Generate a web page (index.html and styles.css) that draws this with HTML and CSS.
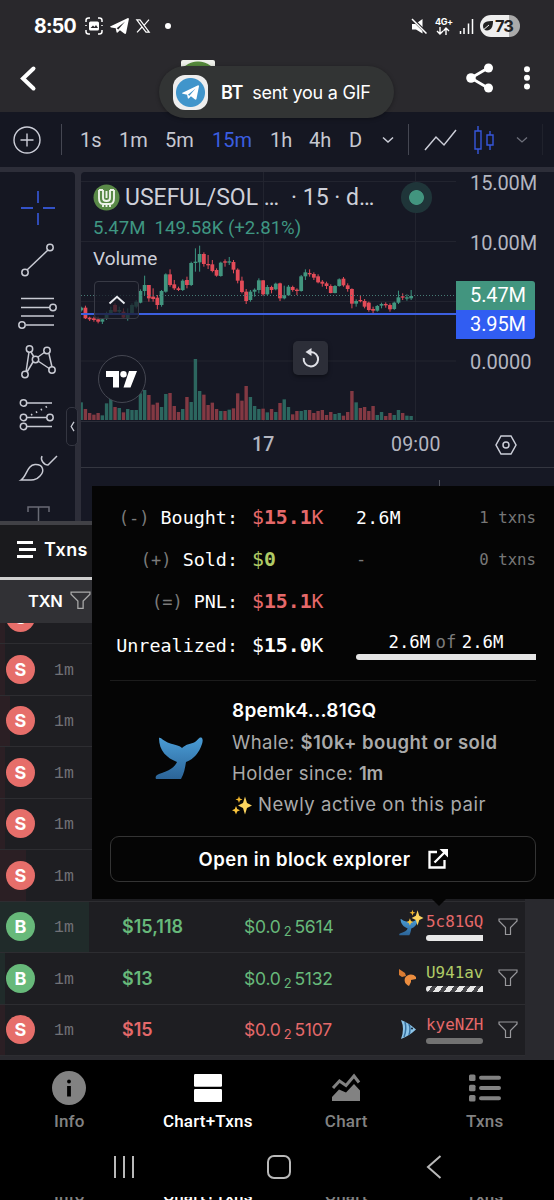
FILE: index.html
```html
<!DOCTYPE html>
<html lang="en">
<head>
<meta charset="utf-8">
<title>USEFUL/SOL</title>
<link rel="stylesheet" href="styles.css">
</head>
<body>
<svg width="0" height="0" class="defs">
  <defs>
    <linearGradient id="blue" x1="0" y1="0" x2="0" y2="1"><stop offset="0" stop-color="#4a9dd6"/><stop offset="1" stop-color="#2c6498"/></linearGradient>
    <symbol id="funnel" viewBox="0 0 20 20"><path d="M1 2H19V4L12.500 10.500V17.500H7.500V10.500L1 4Z" fill="none" stroke="currentColor" stroke-width="1.200"/></symbol>
    <symbol id="tail" viewBox="0 0 48 42"><path d="M4 1C6 0 8 4 14 6C20 8 24 8 27 11C31 7 36 7 40 5C43 3 44 0 46 .5C48 1 48 4 47 7C44 16 39 22 31 25C30 31 29 37 26 42H1C0 40 1 38 4 37C14 34 20 30 22 25C12 21 4 14 4 1Z" fill="url(#blue)"/></symbol>
    <symbol id="sparkles" viewBox="0 0 20 20"><path d="M13 1.500L15 8L20 10.500L15 13L13 19.500L11 13L6 10.500L11 8Z" fill="#fbd45f"/><path d="M7 1L7.900 3.600L10.500 4.500L7.900 5.400L7 8L6.100 5.400L3.500 4.500L6.100 3.600Z" fill="#f4b92e"/><path d="M4 11L5.200 14L8 15.200L5.200 16.400L4 19.500L2.800 16.400L0 15.200L2.800 14Z" fill="#fbc63c"/></symbol>
    <symbol id="plane" viewBox="0 0 20 17"><path d="M0 9L19 0Q20 0 20 1L17 16Q16.500 17.500 15 16.500L10.500 13L8 15.500Q7 16 6.800 15L6 11L1 10Q0 9.700 0 9ZM7 11L16 3.800L8.700 12.200Z" fill="currentColor" fill-rule="evenodd"/></symbol>
  </defs>
</svg>

<div class="status">
  <span class="time">8:50</span>
  <svg class="shot" viewBox="0 0 18 18"><g fill="none" stroke="#fff" stroke-width="1.500"><path d="M1 5V3.500Q1 1 3.500 1H5M13 1H14.500Q17 1 17 3.500V5M17 13V14.500Q17 17 14.500 17H13M5 17H3.500Q1 17 1 14.500V13M1 8V9M17 8V9"/></g><rect x="4" y="4.500" width="10" height="9" rx="1.500" fill="#fff"/><path d="M5.500 11L8 8.500L9.500 10L11 8L13 11Z" fill="#29282c"/></svg>
  <svg class="tg"><use href="#plane"/></svg>
  <svg class="xlogo" viewBox="0 0 14 14"><path d="M.8.800H4L13.200 13.200H10ZM13 .6L8 6.300M6 8L1 13.400" fill="none" stroke="#fff" stroke-width="1.200"/></svg>
  <i class="dot"></i>
  <svg class="mute" viewBox="0 0 17 17"><path d="M1 6H4.500L11.500 1V15.500L5 11.500H1Z" fill="#fff"/><path d="M1.500 1L16 15.500" stroke="#29282c" stroke-width="3"/><path d="M1 1L15.500 15.500" stroke="#fff" stroke-width="1.500"/></svg>
  <span class="net"><b>4G+</b><svg viewBox="0 0 14 8"><path d="M4 0V7M1 4L4 7L7 4M10 8V1M7.500 4L10 1L13 4" fill="none" stroke="#fff" stroke-width="1.400"/></svg></span>
  <svg class="signal" viewBox="0 0 15 16"><path d="M1.500 16V13M5 16V10M9.500 16V5.500M13.500 16V1" stroke="#fff" stroke-width="1.500"/></svg>
  <span class="battery"><svg viewBox="0 0 12 12"><path d="M1 6C1 2 5 1 11 1C11 7 9 10.500 5 10.500C2.500 10.500 1 8.500 1 6Z" fill="#222"/><path d="M0 11L7 5" stroke="#eee" stroke-width="1"/></svg>73</span>
</div>

<div class="header">
  <svg class="back" viewBox="0 0 16 25"><path d="M13.500 2.500L3 12.500L13.500 22.500" fill="none" stroke="#fff" stroke-width="4" stroke-linecap="round"/></svg>
  <i class="peek"></i>
  <svg class="share" viewBox="0 0 28 30"><path d="M22 5L5 15L22 25" fill="none" stroke="#fff" stroke-width="2.800"/><g fill="#fff"><circle cx="22.500" cy="5" r="4.500"/><circle cx="5" cy="15" r="4.800"/><circle cx="22.500" cy="25" r="4.500"/></g></svg>
  <svg class="more" viewBox="0 0 6 24"><g fill="#fff"><circle cx="3" cy="3.200" r="3"/><circle cx="3" cy="11.800" r="3"/><circle cx="3" cy="20.400" r="3"/></g></svg>
</div>
<div class="toast"><span class="appicon"><svg><use href="#plane"/></svg></span><b>BT</b><span>sent you a GIF</span></div>

<div class="intervals">
  <svg width="28" height="28" viewBox="0 0 28 28"><g fill="none" stroke="#ccced8" stroke-width="1.400"><circle cx="14" cy="14" r="13"/><path d="M7.500 14H20.500M14 7.500V20.500"/></g></svg>
  <i class="sep"></i><span>1s</span><span>1m</span><span>5m</span><span class="on">15m</span><span>1h</span><span>4h</span><span>D</span>
  <svg width="12" height="8" viewBox="0 0 12 8"><path d="M1 1.500L6 6L11 1.500" fill="none" stroke="#ccced8" stroke-width="1.500"/></svg>
  <i class="sep"></i>
  <svg width="33" height="22" viewBox="0 0 33 22"><path d="M1 21L12 8L20 16L32 1" fill="none" stroke="#ccced8" stroke-width="1.500"/></svg>
  <svg width="20" height="30" viewBox="0 0 20 30"><path d="M1 6H7V24H1ZM4 1V6M4 24V29M13 10H19V20H13ZM16 6V10M16 20V25" fill="none" stroke="#3657dc" stroke-width="1.400"/></svg>
  <svg width="12" height="8" viewBox="0 0 12 8"><path d="M1 1.500L6 6L11 1.500" fill="none" stroke="#6e707b" stroke-width="1.300"/></svg>
  <i class="sep faint"></i>
</div>

<div class="workspace">
  <div class="tools">
    <svg viewBox="0 0 36 36"><path d="M18 1V13M18 23V35M1 18H13M23 18H35" stroke="#3352c8" stroke-width="1.800"/></svg>
    <svg viewBox="0 0 36 36"><g fill="none" stroke="#c8cad3" stroke-width="1.500"><path d="M7 28L28 8"/><circle cx="5" cy="30.500" r="3.200"/><circle cx="30" cy="5.500" r="3.200"/></g></svg>
    <svg viewBox="0 0 36 36"><g fill="none" stroke="#c8cad3" stroke-width="1.500"><path d="M1 4.500H34M1 13.500H30M1 22H34M6 31H34"/><circle cx="33" cy="13.500" r="3.200"/><circle cx="2" cy="31" r="3.200"/></g></svg>
    <svg viewBox="0 0 36 36"><g fill="none" stroke="#c8cad3" stroke-width="1.500"><path d="M6 27L9 7M11 7L14 12M18 12L25 7M29 9L32 22M18 16L30 24M13 17L7 27"/><circle cx="9.500" cy="4" r="3.200"/><circle cx="27" cy="5.500" r="3.200"/><circle cx="15.500" cy="14.500" r="3.200"/><circle cx="32" cy="25" r="3.200"/><circle cx="5" cy="29.500" r="3.200"/></g></svg>
    <svg viewBox="0 0 36 36"><g fill="none" stroke="#c8cad3" stroke-width="1.500"><circle cx="3.500" cy="6" r="3.200"/><circle cx="3.500" cy="20.500" r="3.200"/><circle cx="30" cy="20.500" r="3.200"/><circle cx="3.500" cy="29.500" r="3.200"/><path d="M7 6H32M7 20.500H27M7 29.500H32"/><path d="M11 18L30 8" stroke-dasharray="1.500 4" stroke-width="1.800"/></g></svg>
    <svg viewBox="0 0 36 36"><path d="M1 31C7 27 7 16 15 15.500C23 15 25 22 20 27C16 32 10 31 1 31ZM22 7C20 11 24 16 28 16L37 7" fill="none" stroke="#c8cad3" stroke-width="1.500"/></svg>
    <svg viewBox="0 0 36 36"><path d="M8 11V6H29V11M18.500 6V28M14 28H23" fill="none" stroke="#696b75" stroke-width="1.500"/></svg>
  </div>
  <div class="chart">
    <svg id="plot" width="375" height="249" viewBox="81 172 375 249"></svg>
    <div class="legend">
      <div class="pair"><svg width="27" height="27" viewBox="0 0 27 27"><circle cx="13.500" cy="13.500" r="13" fill="#5a8a48"/><path d="M6 6V14Q6 20 10 20M10 20V23M21 6V14Q21 20 17 20M17 20V23M10 6V14Q10 17 13.500 17Q17 17 17 14V6M6 6H10M17 6H21M13.500 7V14M10 20H17M13.500 20V23" fill="none" stroke="#eef3ea" stroke-width="1.900"/></svg><span class="sym">USEFUL/SOL …</span><span class="res">· 15 · d…</span><i class="live"></i></div>
      <div class="quote"><span>5.47M</span><span>149.58K (+2.81%)</span></div>
      <div class="vol">Volume</div>
      <div class="fold"><svg width="18" height="10" viewBox="0 0 18 10"><path d="M1.500 8.500L9 1.800L16.500 8.500" fill="none" stroke="#e8e9ee" stroke-width="2"/></svg></div>
    </div>
    <div class="tv"><svg width="32" height="17" viewBox="0 0 32 17"><path d="M0 0H13V16.500H7V6H0ZM23 0H31L24.500 16.500H17.500Z" fill="#fff"/><circle cx="17.500" cy="3.300" r="3.200" fill="#fff"/></svg></div>
    <div class="reset"><svg width="18" height="20" viewBox="0 0 18 20"><path d="M1.800 10A7.200 7.200 0 1 0 9 4H6" fill="none" stroke="#dfe0e6" stroke-width="2"/><path d="M3.500 4L9.500 0V8Z" fill="#dfe0e6"/></svg></div>
    <div class="scale"><span>15.00M</span><span>10.00M</span><b class="up">5.47M</b><b class="line">3.95M</b><span class="zero">0.0000</span></div>
    <div class="times"><b>17</b><span>09:00</span><svg width="22" height="20" viewBox="0 0 22 20"><g fill="none" stroke="#ccced8" stroke-width="1.500"><path d="M6 1H16L21 10L16 19H6L1 10Z"/><circle cx="11" cy="10" r="3"/></g></svg></div>
    <i class="tick"></i>
  </div>
  <div class="handle"><svg width="5" height="11" viewBox="0 0 5 11"><path d="M4 .8L1.200 5.500L4 10.200" fill="none" stroke="#c8cad3" stroke-width="1.300"/></svg></div>
</div>

<div class="tabs"><svg width="19" height="17" viewBox="0 0 19 17"><path d="M0 1.500H16M2 8.500H19M0 15.500H16" stroke="#fff" stroke-width="3"/></svg>Txns</div>
<div class="thead">TXN<svg><use href="#funnel"/></svg></div>

<div class="list">
  <div class="row sell"><i class="bar" style="width:5px"></i><b class="badge">S</b><span class="age">1m</span></div>
  <div class="row sell"><i class="bar" style="width:5px"></i><b class="badge">S</b><span class="age">1m</span></div>
  <div class="row sell"><i class="bar" style="width:10px"></i><b class="badge">S</b><span class="age">1m</span></div>
  <div class="row sell"><i class="bar" style="width:5px"></i><b class="badge">S</b><span class="age">1m</span></div>
  <div class="row sell"><i class="bar" style="width:5px"></i><b class="badge">S</b><span class="age">1m</span></div>
  <div class="row sell"><i class="bar" style="width:26px"></i><b class="badge">S</b><span class="age">1m</span></div>
  <div class="row buy"><i class="bar" style="width:89px"></i><b class="badge">B</b><span class="age">1m</span><b class="usd">$15,118</b><span class="price">$0.0<sub>2</sub>5614</span><span class="kind"><svg class="wtail"><use href="#tail"/></svg><svg class="wspark"><use href="#sparkles"/></svg></span><span class="wallet red">5c81GQ<i class="full"></i></span><svg class="filter"><use href="#funnel"/></svg></div>
  <div class="row buy"><i class="bar" style="width:5px"></i><b class="badge">B</b><span class="age">1m</span><b class="usd">$13</b><span class="price">$0.0<sub>2</sub>5132</span><span class="kind"><svg width="18" height="18" viewBox="0 0 18 18"><path d="M0 0L6 4L7 7L3 8L0 6Z" fill="#d97b32"/><path d="M6 9C8 5 14 4 17 8L17 10L12 11L12 13L10 17C6 15 5 12 6 9Z" fill="#ec8d3f"/></svg></span><span class="wallet lime">U941av<i class="striped"></i></span><svg class="filter"><use href="#funnel"/></svg></div>
  <div class="row sell"><i class="bar" style="width:5px"></i><b class="badge">S</b><span class="age">1m</span><b class="usd">$15</b><span class="price">$0.0<sub>2</sub>5107</span><span class="kind"><svg width="18" height="19" viewBox="0 0 18 19"><path d="M2 0Q10 3 17 9.500Q10 16 2 19Q6 9 2 0Z" fill="#8cc4e8"/><path d="M6 2Q8 9 5 17M10 4Q12 9 10 15" fill="none" stroke="#356f9f" stroke-width="1.500"/><circle cx="13" cy="8.500" r="1" fill="#123"/></svg></span><span class="wallet red">kyeNZH<i class="empty"></i></span><svg class="filter"><use href="#funnel"/></svg></div>
</div>

<div class="popover">
  <div class="stats">
    <span class="label"><em>(-)</em> Bought:</span><span class="val red">$<b>15.1</b>K</span><span>2.6M</span><span class="count">1 txns</span>
    <span class="label"><em>(+)</em> Sold:</span><span class="val lime">$<b>0</b></span><em>-</em><span class="count">0 txns</span>
    <span class="label"><em>(=)</em> PNL:</span><span class="val red">$<b>15.1</b>K</span><span></span><span></span>
    <span class="label">Unrealized:</span><span class="val">$<b>15.0</b>K</span><div class="holding"><span>2.6M <em>of</em> 2.6M</span><i></i></div>
  </div>
  <div class="maker">
    <svg class="whale"><use href="#tail"/></svg>
    <div class="lines"><b class="addr">8pemk4...81GQ</b><p>Whale: <b>$10k+ bought or sold</b></p><p>Holder since: <b class="since">1m</b></p><p class="fresh"><svg><use href="#sparkles"/></svg>Newly active on this pair</p></div>
  </div>
  <div class="explore">Open in block explorer<svg width="20" height="20" viewBox="0 0 20 20"><path d="M9 3H1.500V18.500H16.500V11M6.500 13.500L17.500 2.500" fill="none" stroke="#fff" stroke-width="2.300"/><path d="M11.500 0H20V8.500Z" fill="#fff"/></svg></div>
  <i class="caret"></i>
</div>

<div class="nav">
  <div><svg width="34" height="34" viewBox="0 0 34 34"><circle cx="17" cy="17" r="17" fill="#828282"/><circle cx="17" cy="10.500" r="1.900"/><path d="M17 15V25.500" stroke="#000" stroke-width="3.800"/></svg><span>Info</span></div>
  <div class="sel"><svg width="28" height="34" viewBox="0 0 28 34"><rect y="3" width="28" height="12.700" rx="1.200" fill="#fff"/><rect y="18" width="28" height="13" rx="1.200" fill="#fff"/></svg><span>Chart+Txns</span></div>
  <div><svg width="28" height="34" viewBox="0 0 28 34"><path d="M0 30V26L7 18.500L14 21.500L22 13L28 19.500V30Z" fill="#828282"/><path d="M1 17L7.500 10L14 14.500L22 5L27 11.500" fill="none" stroke="#828282" stroke-width="3"/></svg><span>Chart</span></div>
  <div><svg width="32" height="34" viewBox="0 0 32 34"><g fill="#828282"><rect y="3.500" width="6.500" height="6.500" rx="1.500"/><rect y="13.700" width="6.500" height="6.500" rx="1.500"/><rect y="24" width="6.500" height="6.500" rx="1.500"/></g><path d="M12 6.700H30M12 17H30M12 27.300H30" stroke="#828282" stroke-width="4" stroke-linecap="round"/></svg><span>Txns</span></div>
</div>
<div class="sysnav">
  <svg width="22" height="24" viewBox="0 0 22 24"><path d="M2 1V23M11 1V23M20 1V23" stroke="#b9b9b9" stroke-width="2"/></svg>
  <svg width="24" height="24" viewBox="0 0 24 24"><rect x="1" y="1" width="22" height="22" rx="6" fill="none" stroke="#b9b9b9" stroke-width="2"/></svg>
  <svg width="16" height="24" viewBox="0 0 16 24"><path d="M14.500 1L2 12L14.500 23" fill="none" stroke="#b9b9b9" stroke-width="2"/></svg>
</div>
<div class="ghost"><span>Info</span><span class="sel">Chart+Txns</span><span>Chart</span><span>Txns</span></div>
<script src="chart.js"></script>
</body>
</html>
```
FILE: styles.css
```css
* { box-sizing: border-box; }
body { margin: 0; width: 554px; height: 1200px; overflow: hidden; position: relative; background: #000; display: flex; flex-direction: column; font-family: Inter, "Open Sans", sans-serif; color: #fff; }
body > * { flex: none; }
svg { display: block; overflow: visible; flex: none; }
i, em { font-style: normal; display: inline-block; }
.defs { position: absolute; }

.status { height: 50px; background: #29282c; display: flex; align-items: center; padding: 2px 34px 0 34px; }
.time { font: 700 19.500px Inter; letter-spacing: -.7px; width: 51px; }
.shot { width: 18px; height: 18px; }
.tg { width: 19px; height: 16px; margin-left: 7px; }
.xlogo { width: 14px; height: 14px; margin-left: 7px; }
.dot { width: 6px; height: 6px; border-radius: 3px; background: #fff; margin-left: 15px; }
.mute { width: 17px; height: 17px; margin-left: auto; }
.net { width: 18px; margin-left: 7px; font-size: 9px; line-height: 8px; letter-spacing: -.4px; }
.net b { display: block; font-weight: 700; }
.net svg { width: 14px; height: 8px; margin: 1px 0 0 1px; }
.signal { width: 15px; height: 16px; margin-left: 6px; }
.battery { width: 40px; height: 22px; margin-left: 6px; border-radius: 11px; background: linear-gradient(90deg, #eee 72%, #aaa 72%); color: #222; font: 700 16.500px/22px Inter; display: flex; align-items: center; letter-spacing: -1px; padding-left: 2px; }
.battery svg { width: 12px; height: 12px; margin-right: 1px; }

.header { height: 62px; background: #2a292d; display: flex; align-items: flex-start; padding: 13px 24px 0 20px; }
.back { width: 16px; height: 25px; margin-top: 3px; }
.peek { width: 34px; height: 22px; margin: -3px auto 0 145px; border-radius: 2px; background: radial-gradient(circle at 50% 100%, #568a3c 20px, #eef0ea 21px); }
.share { width: 28px; height: 30px; margin-right: 30px; }
.more { width: 6px; height: 24px; margin-top: 3px; }
.toast { position: absolute; left: 159px; top: 66px; width: 235px; height: 52px; border-radius: 26px; background: #323434; box-shadow: 0 1px 4px #0005; display: flex; align-items: center; padding-left: 14px; font-size: 18px; letter-spacing: -.25px; }
.toast b { font-weight: 600; margin: 0 9px 0 13px; }
.appicon { width: 35px; height: 35px; border-radius: 12px; background: radial-gradient(circle, #4095cb 14px, #eee 15px); display: grid; place-items: center; color: #fff; }
.appicon svg { width: 17px; height: 15px; }

.intervals { height: 55px; background: #151722; display: grid; grid-template-columns: 48px 19px 39px 46px 47px 58px 39px 40px 33px 26px 16px 50px 42px 26px 1fr; padding-left: 13px; align-items: center; font: 20px Roboto; color: #c6c8d1; }
.on { color: #3b5ee0; }
.sep { width: 1px; height: 31px; background: #454752; }
.faint { background: #20222c; }

.workspace { height: 354px; border-top: 5px solid #2d2e39; background: #2d2e39; display: flex; gap: 6px; position: relative; }
.tools { width: 75px; background: #151722; border-top-right-radius: 4px; display: flex; flex-direction: column; align-items: center; gap: 15.800px; padding: 18px 0 0 1px; overflow: hidden; }
.tools svg { width: 36px; height: 36px; }
.chart { width: 473px; height: 349px; background: #161824; border-top-left-radius: 4px; position: relative; display: grid; grid-template: 249px 47px 1fr / 375px 98px; overflow: hidden; }
.legend { position: absolute; left: 12px; top: 0; font-family: Roboto; color: #ced0d9; }
.pair { display: flex; align-items: center; height: 51px; font-size: 23px; }
.sym { margin-left: 5px; width: 166px; white-space: nowrap; }
.res { width: 107px; white-space: nowrap; }
.live { width: 31px; height: 31px; border-radius: 50%; background: radial-gradient(circle, #42957f 7px, #1f3539 7.800px); margin-left: 3px; }
.quote { font-size: 18.600px; line-height: 24px; height: 28px; margin-top: -7px; color: #3f9682; display: flex; gap: 9px; }
.vol { font-size: 19px; line-height: 24px; margin-top: 3px; }
.fold { width: 45px; height: 38px; margin: 10px 0 0 1px; border: 1px solid #383a45; border-radius: 4px; background: #171925bb; display: grid; place-items: center; }
.tv { position: absolute; left: 17px; top: 183px; width: 48px; height: 48px; border: 1.500px solid #454752; border-radius: 50%; background: #151722; display: grid; place-items: center; }
.reset { position: absolute; left: 212px; top: 169px; width: 35px; height: 34px; border-radius: 5px; background: #2c2e38; display: grid; place-items: center; box-shadow: 0 2px 4px #0006; }
.scale { font: 20px/24px Roboto; color: #b4b6c0; display: flex; flex-direction: column; letter-spacing: -.1px; }
.scale span { padding-left: 14px; height: 60px; flex: none; }
.scale span:first-child { margin-top: -1px; }
.scale b { width: 79px; height: 29px; flex: none; line-height: 29px; padding-left: 14px; font-weight: 400; color: #fff; }
.scale .up { margin-top: -10px; background: #42957f; border-radius: 0 3px 0 0; }
.scale .line { background: #315df2; border-radius: 0 0 3px 0; }
.scale .zero { margin-top: 11px; height: 24px; letter-spacing: 0; }
.times { grid-column: 1 / 3; border-top: 1px solid #2a2c37; border-bottom: 1px solid #343640; display: grid; grid-template-columns: 139px 104px 1fr; padding-left: 171px; align-items: center; font: 19.500px Roboto; letter-spacing: .2px; color: #b4b6c0; }
.times b { font-weight: 500; }
.tick { position: absolute; left: 358px; top: 308px; width: 1px; height: 8px; background: #50525c; }
.handle { position: absolute; left: 66px; top: 235px; width: 12px; height: 39px; border: 1px solid #343641; border-radius: 5px; background: #151722; display: grid; place-items: center; }

.tabs { height: 56px; border-top: 4px solid #414146; background: #1a1a1d; display: flex; align-items: center; gap: 8px; padding: 0 0 4px 17px; font-size: 18px; letter-spacing: .4px; font-weight: 600; }
.thead { height: 46px; border-top: 3px solid #cfcfcf; background: #313135; display: flex; align-items: center; gap: 7px; padding: 0 0 2px 28px; font-size: 16.500px; letter-spacing: -.2px; font-weight: 600; }
.thead svg { width: 21px; height: 21px; color: #aaa; }

.list { height: 437px; background: #29292e; overflow: hidden; }
.list .row:first-child { margin-top: -30.500px; }
.row { width: 525px; height: 51.500px; padding-left: 6px; background: #1e1e22; border-bottom: 1px solid #2d2d31; display: grid; grid-template-columns: 48px 68px 122px 155px 27px 72px 1fr; align-items: center; position: relative; }
.bar { position: absolute; left: 0; top: 0; bottom: 0; background: #2b1f24; }
.buy .bar { background: #202b2a; }
.badge { position: relative; width: 29px; height: 29px; border-radius: 50%; text-align: center; font-size: 18px; line-height: 29px; }
.sell .badge { background: #e66e6a; }
.buy .badge { background: #67b97a; }
.age { font: 16.500px "Liberation Mono"; color: #717176; position: relative; padding-top: 2px; }
.usd { font-size: 18px; font-weight: 600; }
.price { font-size: 17.500px; letter-spacing: -.2px; }
.price sub { font-size: 13px; vertical-align: -3px; line-height: 0; margin: 0 3px; }
.buy .usd, .buy .price { color: #67b97a; }
.sell .usd, .sell .price { color: #e5696a; }
.kind { position: relative; height: 19px; }
.wtail { width: 19px; height: 18px; margin-top: 1px; }
.wspark { position: absolute; left: 7px; top: -8px; width: 18px; height: 17px; }
.wallet { font: 15.900px/18px "DejaVu Sans Mono"; width: 57px; }
.wallet i { display: block; height: 6px; border-radius: 3px 0 0 3px; margin-top: 4px; }
.full { background: #e8e8e8; }
.striped { background: repeating-linear-gradient(125deg, #e8e8e8 0 5px, #444448 5px 9px); }
.wallet .empty { background: #727272; border-radius: 3px; }
.filter { width: 20px; height: 20px; color: #98989c; }
.red { color: #e5696a; }
.lime { color: #b0cb66; }

.popover { position: absolute; left: 92px; top: 486px; width: 462px; height: 413px; background: #050505; padding: 0 18px; }
.stats { height: 195px; border-bottom: 1px solid #1c1c1c; display: grid; grid-template: 42px 42px 42px 46px / 142px 104px 88px 92px; padding-top: 10px; align-items: center; font: 18.400px "DejaVu Sans Mono"; white-space: pre; }
.label { width: 128px; text-align: right; }
.stats em { color: #7b7b7b; font-size: 17px; }
.val { font-size: 19.800px; }
.stats > span:nth-child(4n+3) { font-size: 18px; letter-spacing: .4px; }
.count { color: #777; font-size: 15.700px; text-align: right; }
.holding { grid-column: 3 / 5; height: 34px; text-align: center; font-size: 17.300px; line-height: 24px; margin-top: 3px; }
.holding span { word-spacing: -5px; }
.holding em { font-size: 17.300px; }
.holding i { display: block; height: 6px; background: #e6e6e6; border-radius: 3px 0 0 3px; }
.maker { height: 155px; display: flex; padding: 14px 0 0 45px; }
.whale { width: 48px; height: 42px; margin: 42px 29px 0 0; }
.lines { font-size: 18.500px; letter-spacing: .45px; color: #aaa; white-space: nowrap; }
.lines p { margin: 0; line-height: 31px; }
.lines b { font-weight: 600; }
.lines .since { letter-spacing: -.3px; }
.lines .addr { display: block; color: #fff; line-height: 32px; font-size: 19px; letter-spacing: .25px; }
.fresh { display: flex; gap: 6px; align-items: center; letter-spacing: .55px; }
.fresh svg { width: 20px; height: 20px; }
.explore { height: 46px; border: 1px solid #343434; border-radius: 9px; display: flex; align-items: center; justify-content: center; gap: 17px; font-size: 18.500px; letter-spacing: .5px; font-weight: 600; }
.caret { position: absolute; left: 340px; top: 413px; border: 7px solid transparent; border-top-color: #050505; border-bottom: 0; }

.nav { height: 77px; background: #000; display: grid; grid-template-columns: repeat(4, 138.500px); padding-top: 11px; }
.nav div { display: flex; flex-direction: column; align-items: center; }
.nav span, .ghost span { font: 500 17px/20px Roboto; letter-spacing: .2px; color: #828282; }
.nav span { margin-top: 6px; }
.nav .sel span, .ghost .sel { color: #fff; }
.sysnav { height: 60px; display: grid; grid-template-columns: 154px 159px 1fr; padding-left: 113px; align-items: center; }
.ghost { height: 3px; overflow: hidden; display: grid; grid-template-columns: repeat(4, 138.500px); text-align: center; }
.ghost span { margin-top: -12px; }
```
FILE: chart.js
```js
// Each candle: direction, high, body top, body bottom, low, volume (thirds of a pixel).
const candles = `
g 425 428 436 440 53|r 422 428 460 462 33|r 455 458 463 468 21|r 455 460 465 470 16|r 455 463 470 475 21|g 460 463 470 477 14
g 440 445 462 465 50|g 425 435 447 450 70|r 415 420 440 442 39|g 425 435 440 445 36|r 430 440 458 460 23|g 430 445 460 467 33
g 415 420 445 450 30|g 405 410 425 430 30|g 373 378 413 415 80|g 332 360 378 390 90|r 360 360 400 410 75|r 370 395 402 410 46
r 390 398 420 433 52|g 375 378 420 425 39|g 325 328 380 383 78|r 313 328 360 365 81|r 345 358 370 375 42|r 365 370 375 378 24
g 343 347 375 378 33|r 335 345 360 370 69|g 290 294 360 363 54|g 250 290 294 320 183|g 242 267 292 320 87|r 262 267 297 305 76
r 270 297 300 312 45|r 285 298 318 322 52|r 310 315 332 335 33|g 290 293 333 335 27|r 283 289 293 305 27|g 276 289 292 300 31
r 285 291 314 325 35|r 310 314 347 355 80|r 335 347 381 385 58|r 372 380 408 417 102|g 375 380 405 410 69|g 370 374 380 395 42
g 340 346 375 385 33|r 345 346 388 392 34|g 360 366 388 392 23|r 362 366 375 385 33|g 353 356 373 376 24|r 353 355 400 408 51
g 362 391 400 403 62|g 360 365 391 392 39|r 362 366 375 380 17|r 370 374 378 390 27|g 330 334 378 380 27|g 313 322 334 345 30
r 313 324 328 335 30|r 322 327 338 345 21|r 328 334 352 355 27|r 345 350 356 365 30|r 350 355 363 372 15|r 358 363 384 385 24
g 360 363 384 385 18|g 340 343 363 365 21|r 336 341 361 365 13|r 355 361 372 380 24|r 370 372 416 430 87|g 403 408 416 425 53
r 390 405 408 412 36|r 402 408 425 430 39|r 410 413 435 440 27|r 425 432 437 445 42|g 420 423 437 440 15|g 413 417 422 430 24
r 412 417 420 428 12|r 415 420 433 440 21|g 410 413 432 435 15|g 377 397 413 417 30|r 385 394 397 405 21|g 388 397 399 407 13
g 375 393 400 405 12`.trim().split(/[|\n]/).map(s => s.split(' '));

const rect = (x, y, w, h, fill) => `<rect x="${x}" y="${y}" width="${w}" height="${h}" fill="${fill}"/>`;
let out = '';
for (const y of [181, 241, 301, 360.5]) out += rect(81, y, 375, 1, '#22242f');
for (const x of [263, 415]) out += rect(x, 172, 1, 249, '#22242f');
candles.forEach(([dir, ...n], i) => {
  const [hi, top, bot, lo, vol] = n.map(v => v / 3);
  const x = 81.2 + i * 4.23;
  const up = dir === 'g';
  out += rect(x - 1.7, 420 - vol, 3.4, vol, up ? '#2c665f' : '#833943');
  out += rect(x - .5, 165 + hi, 1, lo - hi, up ? '#3b9580' : '#e34b58');
  out += rect(x - 1.9, 165 + top, 3.8, Math.max(bot - top, 1.3), up ? '#42957f' : '#e34b58');
});
out += '<path d="M81 295.500H456" stroke="#477b75" stroke-dasharray="1 2"/>';
out += rect(81, 313, 375, 2, '#3c5fe0');
document.getElementById('plot').innerHTML = out;
```
